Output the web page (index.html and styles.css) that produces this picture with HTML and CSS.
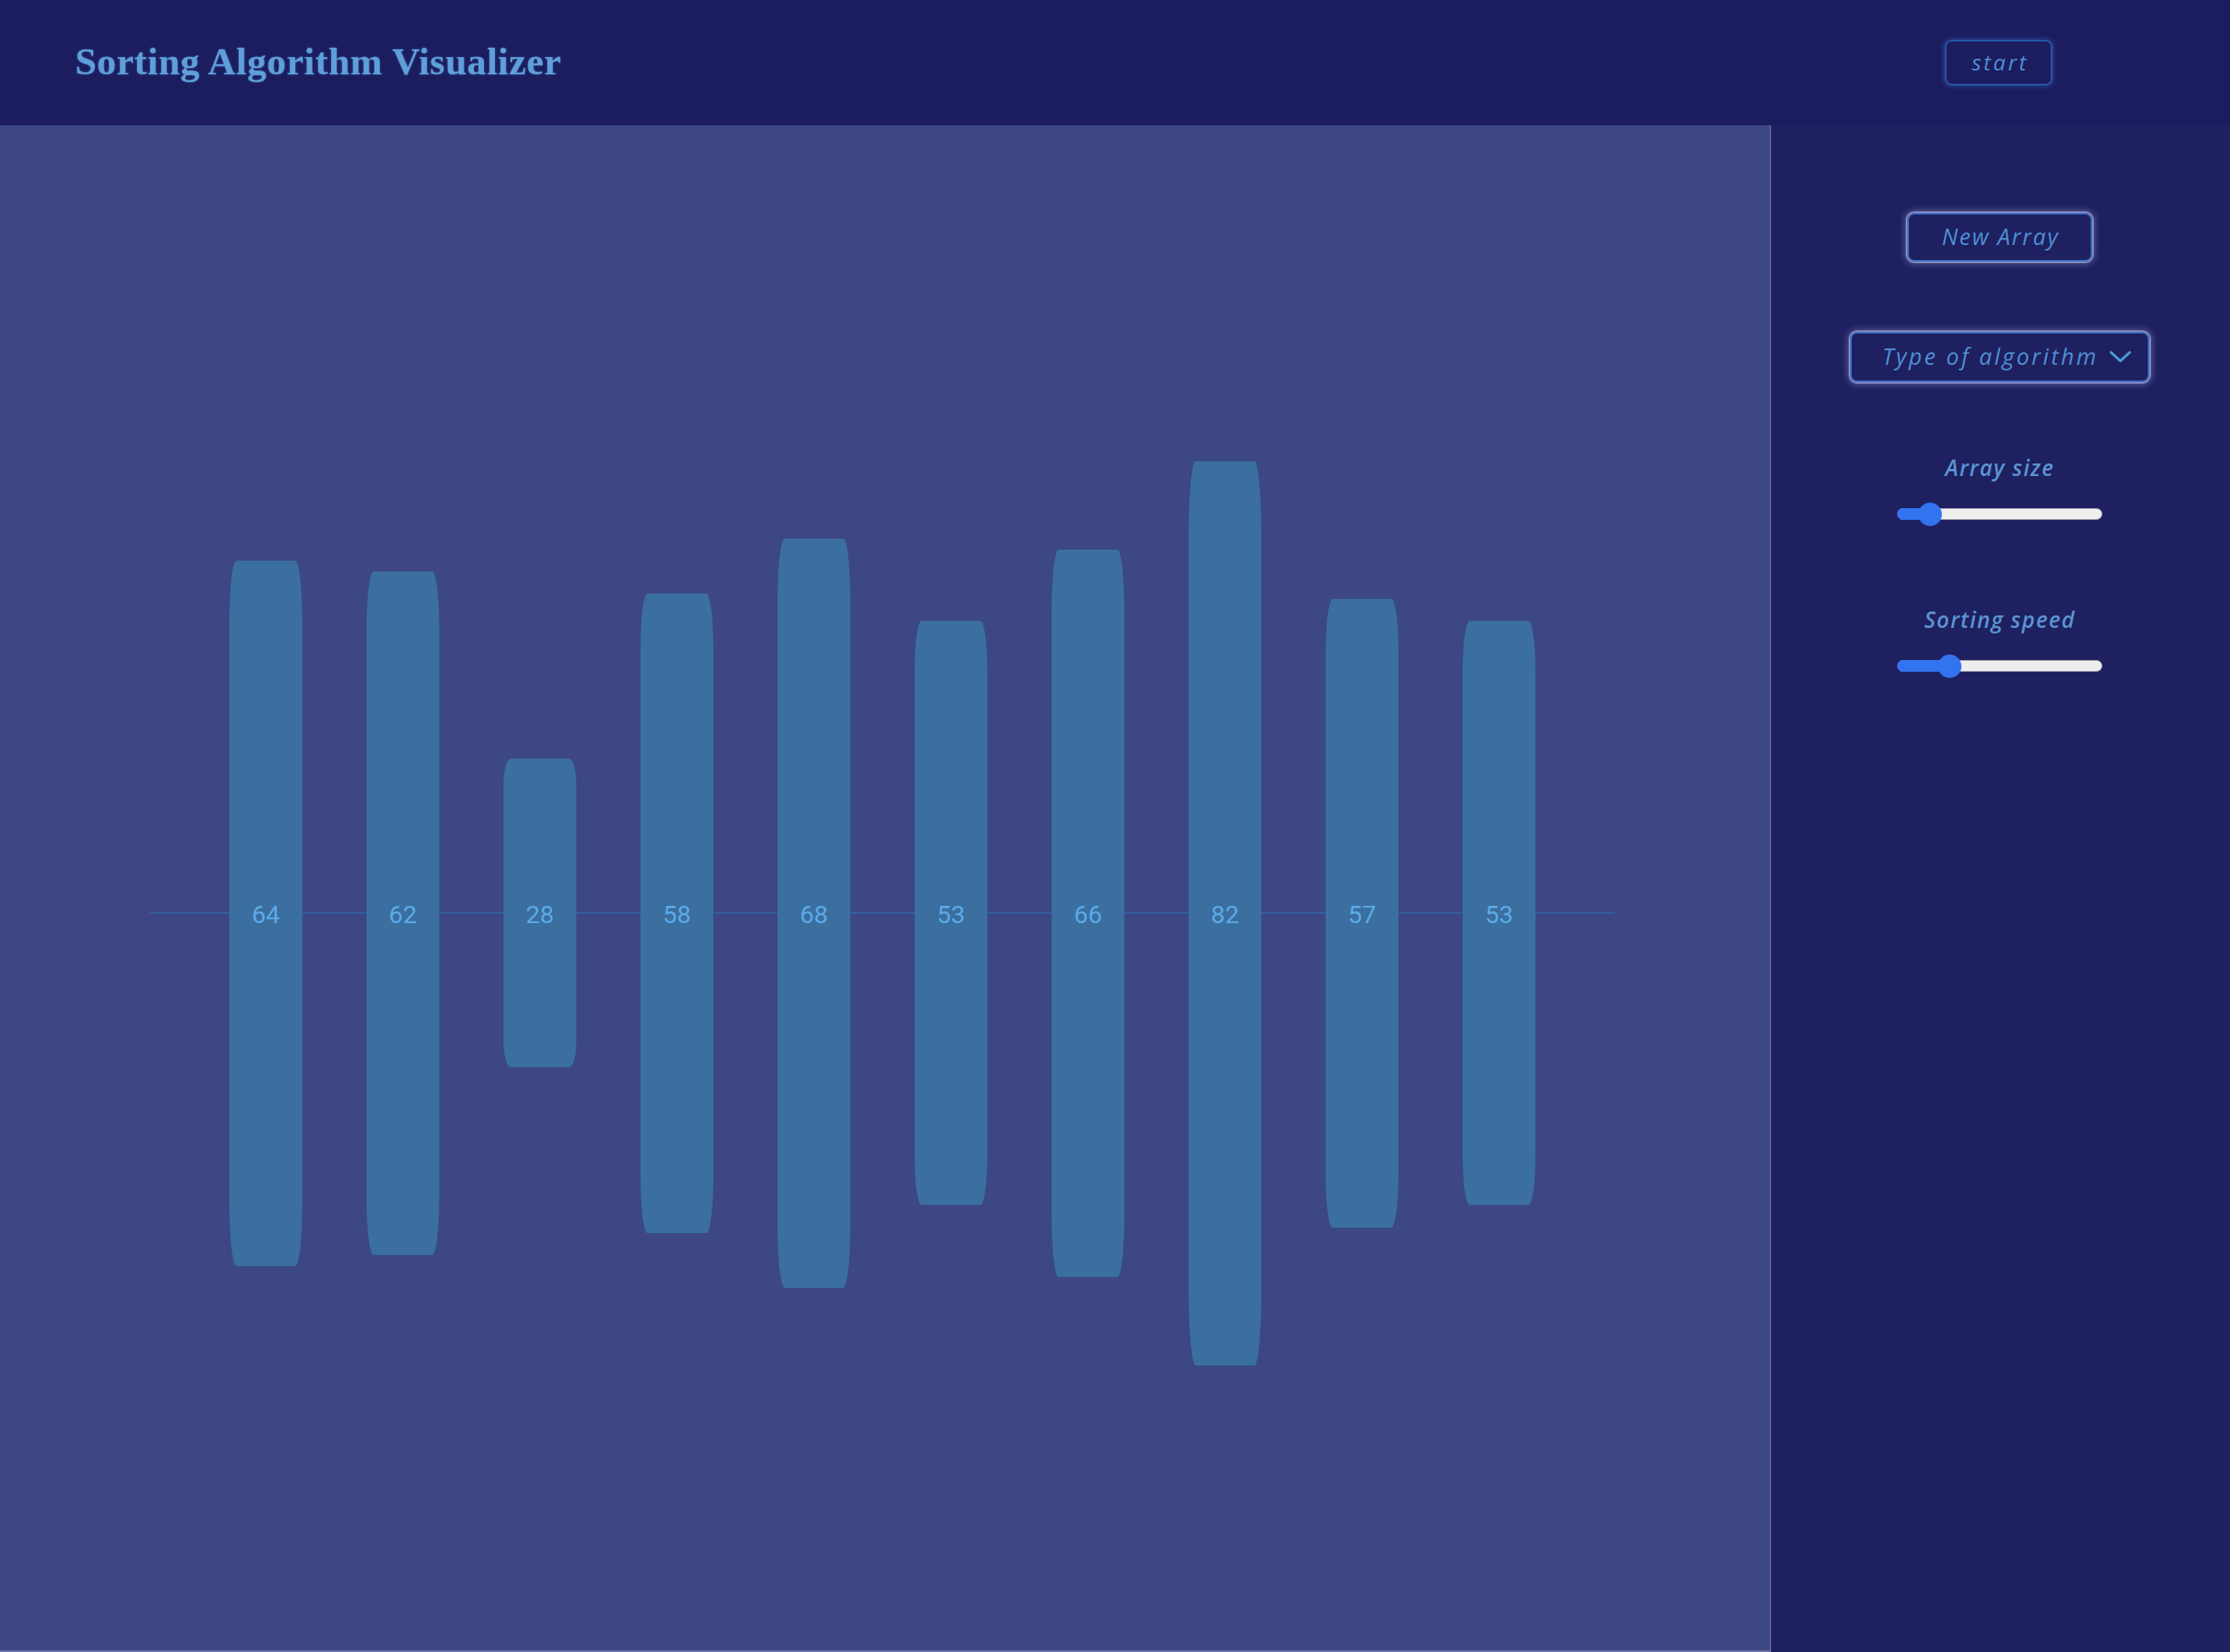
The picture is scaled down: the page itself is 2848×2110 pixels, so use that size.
FILE: index.html
```html
<!DOCTYPE html>
<html lang="en">
<head>
<meta charset="utf-8">
<title>Sorting Algorithm Visualizer</title>
<link rel="stylesheet" href="styles.css">
</head>
<body>
<header class="topbar">
  <h1 class="title">Sorting Algorithm Visualizer</h1>
  <div class="topbar-actions">
    <button class="btn btn-start">start</button>
  </div>
</header>
<div class="layout">
  <main class="stage">
    <div class="chart">
      <div class="bar" style="height:901px"><span>64</span></div>
      <div class="bar" style="height:873px"><span>62</span></div>
      <div class="bar" style="height:394px"><span>28</span></div>
      <div class="bar" style="height:817px"><span>58</span></div>
      <div class="bar" style="height:957px"><span>68</span></div>
      <div class="bar" style="height:746px"><span>53</span></div>
      <div class="bar" style="height:929px"><span>66</span></div>
      <div class="bar" style="height:1155px"><span>82</span></div>
      <div class="bar" style="height:803px"><span>57</span></div>
      <div class="bar" style="height:746px"><span>53</span></div>
    </div>
  </main>
  <aside class="sidebar">
    <button class="btn btn-new">New Array</button>
    <button class="btn btn-select">
      <span>Type of algorithm</span>
      <svg class="chev" width="28" height="16" viewBox="0 0 28 16"><path d="M2 2 L14 13 L26 2" fill="none" stroke="#4a9ad8" stroke-width="3.2" stroke-linecap="round" stroke-linejoin="round"/></svg>
    </button>
    <div class="control control-size">
      <div class="label">Array size</div>
      <div class="slider"><div class="fill" style="width:41px"></div><div class="thumb" style="left:41px"></div></div>
    </div>
    <div class="control control-speed">
      <div class="label">Sorting speed</div>
      <div class="slider"><div class="fill" style="width:66px"></div><div class="thumb" style="left:66px"></div></div>
    </div>
  </aside>
</div>
</body>
</html>
```
FILE: styles.css
```css
* { box-sizing: border-box; }
html, body { margin: 0; padding: 0; }
body {
  width: 2848px;
  height: 2110px;
  overflow: hidden;
  background: #1e2060;
  font-family: "Open Sans", "Liberation Sans", sans-serif;
}
.topbar {
  height: 160px;
  background: #1b1d5e;
  display: grid;
  grid-template-columns: 1fr 587px;
  align-items: center;
}
.title {
  margin: 0 0 0 96px;
  font-family: "Liberation Serif", "DejaVu Serif", serif;
  font-weight: 700;
  font-size: 49px;
  letter-spacing: 0.6px;
  color: #5e9fda;
  text-shadow: 0 0 3px rgba(110, 160, 230, 0.45);
  line-height: 1;
  padding-bottom: 4px;
}
.topbar-actions {
  display: flex;
  justify-content: center;
  padding-right: 4px;
}
.btn {
  background: transparent;
  font-family: "Open Sans", "Liberation Sans", sans-serif;
  font-style: italic;
  color: #4f8fd2;
  cursor: pointer;
  display: flex;
  align-items: center;
  justify-content: center;
}
.btn-start {
  width: 137px;
  height: 58px;
  border: 2px solid #2a58a8;
  border-radius: 8px;
  box-shadow: 0 0 6px 1px rgba(60, 110, 210, 0.55);
  font-size: 28px;
  letter-spacing: 3px;
  padding: 0 0 2px 4px;
}
.layout {
  display: flex;
  height: 1950px;
}
.stage {
  width: 2262px;
  flex: none;
  background: #3d4783;
  border-right: 2px solid #5b6399;
  border-bottom: 2px solid #6d75aa;
  padding-top: 406px;
}
.chart {
  position: relative;
  margin-left: 191px;
  width: 1871px;
  height: 1200px;
  padding: 0 102px;
  display: flex;
  align-items: center;
  gap: 82px;
}
.chart::before {
  content: "";
  position: absolute;
  left: 0;
  right: 0;
  top: 599px;
  height: 2px;
  background: #33609e;
}
.bar {
  position: relative;
  width: 93px;
  flex: none;
  background: #3a6f9f;
  border-radius: 9px / 8.5%;
  display: flex;
  align-items: center;
  justify-content: center;
}
.bar span {
  font-family: Roboto, "Liberation Sans", sans-serif;
  font-size: 32px;
  color: #5caae8;
  padding-top: 4px;
}
.sidebar {
  flex: 1;
  background: #1e2060;
  display: flex;
  flex-direction: column;
  align-items: center;
  padding-top: 112px;
  padding-right: 2px;
}
.btn-new {
  width: 236px;
  height: 62px;
  border: 2px solid #3a6cc2;
  border-radius: 9px;
  box-shadow: 0 0 0 2px rgba(190, 195, 240, 0.55), 0 0 8px 3px rgba(190, 195, 240, 0.4);
  font-size: 29px;
  letter-spacing: 2px;
  padding: 0 0 3px 2px;
}
.btn-select {
  margin-top: 90px;
  width: 382px;
  height: 64px;
  border: 2px solid #3a6cc2;
  border-radius: 9px;
  box-shadow: 0 0 0 2px rgba(190, 195, 240, 0.55), 0 0 8px 3px rgba(190, 195, 240, 0.4);
  font-size: 29px;
  letter-spacing: 3px;
  gap: 14px;
  padding: 0 0 3px 18px;
}
.chev { flex: none; margin-top: 2px; }
.control {
  display: flex;
  flex-direction: column;
  align-items: center;
}
.control-size { margin-top: 90px; }
.control-speed { margin-top: 108px; }
.label {
  font-style: italic;
  font-weight: 600;
  font-size: 28px;
  letter-spacing: 1.5px;
  color: #5a93d0;
  line-height: 38px;
}
.slider {
  position: relative;
  margin-top: 33px;
  width: 262px;
  height: 15px;
  border-radius: 8px;
  background: #eeeeee;
  border: 1px solid #9a9aa8;
}
.fill {
  position: absolute;
  left: -1px;
  top: -1px;
  bottom: -1px;
  background: #3273f0;
  border-radius: 8px 0 0 8px;
}
.thumb {
  position: absolute;
  top: 50%;
  width: 30px;
  height: 30px;
  margin: -15px 0 0 -15px;
  border-radius: 50%;
  background: #3273f0;
}
```
